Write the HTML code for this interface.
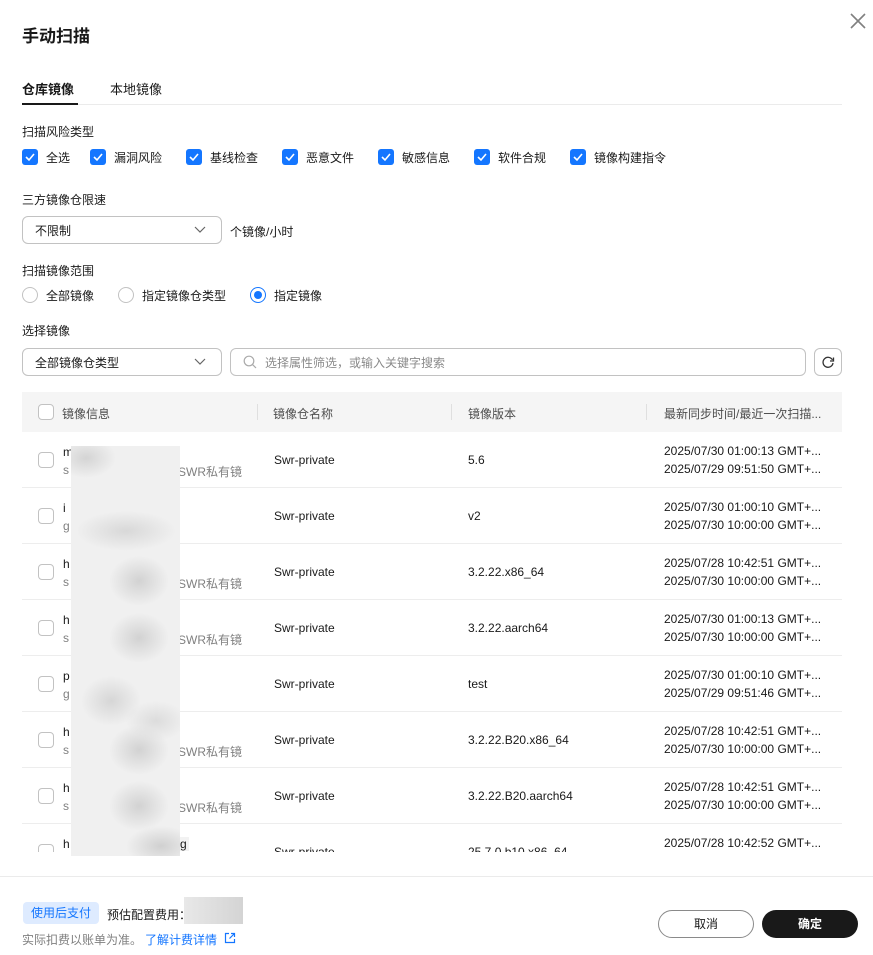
<!DOCTYPE html>
<html><head><meta charset="utf-8"><style>
*{margin:0;padding:0;box-sizing:border-box}
body{width:873px;height:955px;background:#fff;font-family:"Liberation Sans","Noto Sans CJK SC",sans-serif;color:#191919;font-size:12px;position:relative;overflow:hidden}
.a{position:absolute;white-space:nowrap}
.cb{position:absolute;width:16px;height:16px;border-radius:3px;background:#1476ff}
.cb svg{position:absolute;left:2px;top:2px}
.ucb{position:absolute;width:16px;height:16px;border-radius:4px;border:1px solid #c2c2c2;background:#fff}
.rd{position:absolute;width:16px;height:16px;border-radius:50%;border:1px solid #c2c2c2;background:#fff}
.sel{position:absolute;border:1px solid #c2c2c2;border-radius:6px;background:#fff}
.row{position:absolute;left:22px;width:820px;height:56px;border-bottom:1px solid #ededed}
.gray{color:#808080}
</style></head><body>
<div class="a" style="left:22px;top:22px;font-size:17px;font-weight:bold">手动扫描</div>
<svg class="a" style="left:850px;top:13px" width="16" height="16" viewBox="0 0 16 16"><path d="M1 1L15 15M15 1L1 15" stroke="#808080" stroke-width="1.6"/></svg>

<div class="a" style="left:22px;top:79px;font-size:13px;font-weight:bold">仓库镜像</div>
<div class="a" style="left:110px;top:79px;font-size:13px">本地镜像</div>
<div class="a" style="left:22px;top:104px;width:820px;height:1px;background:#ebebeb"></div>
<div class="a" style="left:22px;top:103px;width:56px;height:2px;background:#191919"></div>

<div class="a" style="left:22px;top:123px">扫描风险类型</div>
<div class="cb" style="left:22px;top:149px"><svg width="12" height="12"><path d="M2 6L5 9L10 3" stroke="#fff" stroke-width="1.6" fill="none"/></svg></div><div class="a" style="left:46px;top:149px">全选</div>
<div class="cb" style="left:90px;top:149px"><svg width="12" height="12"><path d="M2 6L5 9L10 3" stroke="#fff" stroke-width="1.6" fill="none"/></svg></div><div class="a" style="left:114px;top:149px">漏洞风险</div>
<div class="cb" style="left:186px;top:149px"><svg width="12" height="12"><path d="M2 6L5 9L10 3" stroke="#fff" stroke-width="1.6" fill="none"/></svg></div><div class="a" style="left:210px;top:149px">基线检查</div>
<div class="cb" style="left:282px;top:149px"><svg width="12" height="12"><path d="M2 6L5 9L10 3" stroke="#fff" stroke-width="1.6" fill="none"/></svg></div><div class="a" style="left:306px;top:149px">恶意文件</div>
<div class="cb" style="left:378px;top:149px"><svg width="12" height="12"><path d="M2 6L5 9L10 3" stroke="#fff" stroke-width="1.6" fill="none"/></svg></div><div class="a" style="left:402px;top:149px">敏感信息</div>
<div class="cb" style="left:474px;top:149px"><svg width="12" height="12"><path d="M2 6L5 9L10 3" stroke="#fff" stroke-width="1.6" fill="none"/></svg></div><div class="a" style="left:498px;top:149px">软件合规</div>
<div class="cb" style="left:570px;top:149px"><svg width="12" height="12"><path d="M2 6L5 9L10 3" stroke="#fff" stroke-width="1.6" fill="none"/></svg></div><div class="a" style="left:594px;top:149px">镜像构建指令</div>

<div class="a" style="left:22px;top:191px">三方镜像仓限速</div>
<div class="sel" style="left:22px;top:216px;width:200px;height:28px"></div>
<div class="a" style="left:35px;top:222px">不限制</div>
<svg class="a" style="left:194px;top:226px" width="12" height="8"><path d="M1 1L6 6L11 1" stroke="#666" stroke-width="1.2" fill="none"/></svg>
<div class="a" style="left:230px;top:223px">个镜像/小时</div>

<div class="a" style="left:22px;top:262px">扫描镜像范围</div>
<div class="rd" style="left:22px;top:287px"></div><div class="a" style="left:46px;top:287px">全部镜像</div>
<div class="rd" style="left:118px;top:287px"></div><div class="a" style="left:142px;top:287px">指定镜像仓类型</div>
<div class="rd" style="left:250px;top:287px;border-color:#1476ff"><div style="position:absolute;left:3px;top:3px;width:8px;height:8px;border-radius:50%;background:#1476ff"></div></div><div class="a" style="left:274px;top:287px">指定镜像</div>

<div class="a" style="left:22px;top:322px">选择镜像</div>
<div class="sel" style="left:22px;top:348px;width:200px;height:28px"></div>
<div class="a" style="left:35px;top:354px">全部镜像仓类型</div>
<svg class="a" style="left:194px;top:358px" width="12" height="8"><path d="M1 1L6 6L11 1" stroke="#666" stroke-width="1.2" fill="none"/></svg>
<div class="sel" style="left:230px;top:348px;width:576px;height:28px"></div>
<svg class="a" style="left:243px;top:355px" width="14" height="14"><circle cx="6" cy="6" r="4.8" stroke="#aaa" stroke-width="1.2" fill="none"/><path d="M9.5 9.5L13 13" stroke="#aaa" stroke-width="1.2"/></svg>
<div class="a gray" style="left:265px;top:354px;color:#8a8a8a">选择属性筛选，或输入关键字搜索</div>
<div class="sel" style="left:814px;top:348px;width:28px;height:28px"></div>
<svg class="a" style="left:821px;top:355px" width="14" height="14" viewBox="0 0 14 14"><path d="M11.5 5A5 5 0 1 0 12 8" stroke="#333" stroke-width="1.3" fill="none"/><path d="M12.5 2.5V6H9" stroke="#333" stroke-width="1.3" fill="none"/></svg>

<div class="a" style="left:22px;top:392px;width:820px;height:40px;background:#f5f5f5"></div>
<div class="ucb" style="left:38px;top:404px"></div>
<div class="a" style="left:62px;top:405px;color:#4d4d4d">镜像信息</div>
<div class="a" style="left:257px;top:404px;width:1px;height:16px;background:#dfdfdf"></div>
<div class="a" style="left:273px;top:405px;color:#4d4d4d">镜像仓名称</div>
<div class="a" style="left:451px;top:404px;width:1px;height:16px;background:#dfdfdf"></div>
<div class="a" style="left:468px;top:405px;color:#4d4d4d">镜像版本</div>
<div class="a" style="left:646px;top:404px;width:1px;height:16px;background:#dfdfdf"></div>
<div class="a" style="left:664px;top:405px;color:#4d4d4d">最新同步时间/最近一次扫描...</div>

<div style="position:absolute;left:0;top:432px;width:873px;height:420px;overflow:hidden">
<div class="row" style="top:0"></div><div class="row" style="top:56px"></div><div class="row" style="top:112px"></div><div class="row" style="top:168px"></div><div class="row" style="top:224px"></div><div class="row" style="top:280px"></div><div class="row" style="top:336px"></div>
<div class="ucb" style="left:38px;top:20px"></div><div class="a" style="left:63px;top:13px">m</div><div class="a gray" style="left:63px;top:31px">s</div><div class="a gray" style="left:178px;top:31px">SWR私有镜</div><div class="a" style="left:274px;top:21px">Swr-private</div><div class="a" style="left:468px;top:21px">5.6</div><div class="a" style="left:664px;top:12px">2025/07/30 01:00:13 GMT+...</div><div class="a" style="left:664px;top:30px">2025/07/29 09:51:50 GMT+...</div>
<div class="ucb" style="left:38px;top:76px"></div><div class="a" style="left:63px;top:69px">i</div><div class="a gray" style="left:63px;top:87px">g</div><div class="a" style="left:274px;top:77px">Swr-private</div><div class="a" style="left:468px;top:77px">v2</div><div class="a" style="left:664px;top:68px">2025/07/30 01:00:10 GMT+...</div><div class="a" style="left:664px;top:86px">2025/07/30 10:00:00 GMT+...</div>
<div class="ucb" style="left:38px;top:132px"></div><div class="a" style="left:63px;top:125px">h</div><div class="a gray" style="left:63px;top:143px">s</div><div class="a gray" style="left:178px;top:143px">SWR私有镜</div><div class="a" style="left:274px;top:133px">Swr-private</div><div class="a" style="left:468px;top:133px">3.2.22.x86_64</div><div class="a" style="left:664px;top:124px">2025/07/28 10:42:51 GMT+...</div><div class="a" style="left:664px;top:142px">2025/07/30 10:00:00 GMT+...</div>
<div class="ucb" style="left:38px;top:188px"></div><div class="a" style="left:63px;top:181px">h</div><div class="a gray" style="left:63px;top:199px">s</div><div class="a gray" style="left:178px;top:199px">SWR私有镜</div><div class="a" style="left:274px;top:189px">Swr-private</div><div class="a" style="left:468px;top:189px">3.2.22.aarch64</div><div class="a" style="left:664px;top:180px">2025/07/30 01:00:13 GMT+...</div><div class="a" style="left:664px;top:198px">2025/07/30 10:00:00 GMT+...</div>
<div class="ucb" style="left:38px;top:244px"></div><div class="a" style="left:63px;top:237px">p</div><div class="a gray" style="left:63px;top:255px">g</div><div class="a" style="left:274px;top:245px">Swr-private</div><div class="a" style="left:468px;top:245px">test</div><div class="a" style="left:664px;top:236px">2025/07/30 01:00:10 GMT+...</div><div class="a" style="left:664px;top:254px">2025/07/29 09:51:46 GMT+...</div>
<div class="ucb" style="left:38px;top:300px"></div><div class="a" style="left:63px;top:293px">h</div><div class="a gray" style="left:63px;top:311px">s</div><div class="a gray" style="left:178px;top:311px">SWR私有镜</div><div class="a" style="left:274px;top:301px">Swr-private</div><div class="a" style="left:468px;top:301px">3.2.22.B20.x86_64</div><div class="a" style="left:664px;top:292px">2025/07/28 10:42:51 GMT+...</div><div class="a" style="left:664px;top:310px">2025/07/30 10:00:00 GMT+...</div>
<div class="ucb" style="left:38px;top:356px"></div><div class="a" style="left:63px;top:349px">h</div><div class="a gray" style="left:63px;top:367px">s</div><div class="a gray" style="left:178px;top:367px">SWR私有镜</div><div class="a" style="left:274px;top:357px">Swr-private</div><div class="a" style="left:468px;top:357px">3.2.22.B20.aarch64</div><div class="a" style="left:664px;top:348px">2025/07/28 10:42:51 GMT+...</div><div class="a" style="left:664px;top:366px">2025/07/30 10:00:00 GMT+...</div>
<div class="ucb" style="left:38px;top:412px"></div><div class="a" style="left:63px;top:405px">h</div><div class="a" style="left:178px;top:405px;background:#f2f2f2;padding:0 2px">g</div><div class="a" style="left:274px;top:413px">Swr-private</div><div class="a" style="left:468px;top:413px">25.7.0.b10.x86_64</div><div class="a" style="left:664px;top:404px">2025/07/28 10:42:52 GMT+...</div>
</div>
<div class="a" style="left:71px;top:446px;width:109px;height:410px;background:
radial-gradient(ellipse 30px 20px at 15px 12px,#d4d4d4,transparent),
radial-gradient(ellipse 50px 20px at 55px 85px,#d8d8d8,transparent),
radial-gradient(ellipse 30px 25px at 68px 135px,#d2d2d2,transparent),
radial-gradient(ellipse 30px 25px at 68px 192px,#d2d2d2,transparent),
radial-gradient(ellipse 30px 25px at 40px 255px,#d6d6d6,transparent),
radial-gradient(ellipse 30px 20px at 85px 275px,#dcdcdc,transparent),
radial-gradient(ellipse 30px 25px at 68px 304px,#d2d2d2,transparent),
radial-gradient(ellipse 30px 25px at 68px 360px,#d2d2d2,transparent),
radial-gradient(ellipse 35px 20px at 90px 400px,#d0d0d0,transparent),
#f0f0f0"></div>

<div class="a" style="left:0;top:876px;width:873px;height:1px;background:#ebebeb"></div>
<div class="a" style="left:23px;top:902px;width:76px;height:22px;border-radius:4px;background:#deebff;color:#1476ff;text-align:center;line-height:22px">使用后支付</div>
<div class="a" style="left:107px;top:906px">预估配置费用：</div>
<div class="a" style="left:184px;top:897px;width:59px;height:27px;background:linear-gradient(90deg,#e8e8e8,#d4d4d4)"></div>
<div class="a gray" style="left:22px;top:931px">实际扣费以账单为准。</div>
<div class="a" style="left:145px;top:931px;color:#1476ff">了解计费详情</div>
<svg class="a" style="left:224px;top:932px" width="12" height="12"><path d="M5 1.5H1.5V10.5H10.5V7M7 1.5H10.5V5M10.5 1.5L5.5 6.5" stroke="#1476ff" stroke-width="1.2" fill="none"/></svg>
<div class="a" style="left:658px;top:910px;width:96px;height:28px;border:1px solid #8a8a8a;border-radius:14px;text-align:center;line-height:26px">取消</div>
<div class="a" style="left:762px;top:910px;width:96px;height:28px;background:#191919;border-radius:14px;text-align:center;line-height:28px;color:#fff;font-weight:bold">确定</div>
</body></html>
